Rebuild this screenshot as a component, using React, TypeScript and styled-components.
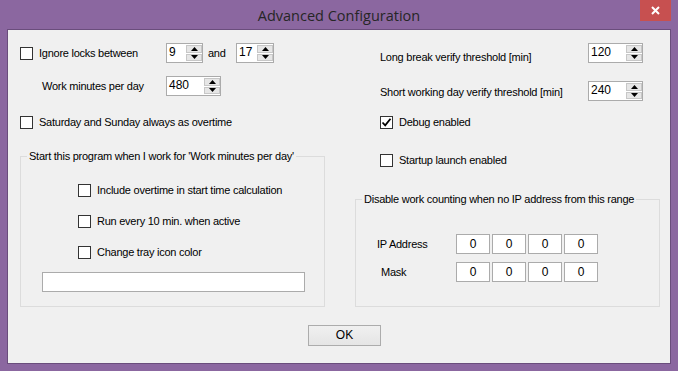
import React from "react";
import styled, { createGlobalStyle } from "styled-components";

const GlobalStyle = createGlobalStyle`
  html, body {
    margin: 0;
    padding: 0;
    background: #8b67a0;
  }
  * {
    box-sizing: border-box;
  }
`;

const Window = styled.div`
  width: 678px;
  height: 371px;
  background-color: #8b67a0;
  display: flex;
  flex-direction: column;
  padding: 0 7px 7px 7px;
  font-family: "Liberation Sans", Arial, sans-serif;
  font-size: 11px;
  letter-spacing: -0.25px;
  color: #000;
`;

const TitleBar = styled.div`
  height: 29px;
  display: grid;
  grid-template-columns: 40px 1fr 40px;
  align-items: start;
`;

const Title = styled.div`
  grid-column: 2;
  text-align: center;
  font-family: "Open Sans", "Noto Sans", sans-serif;
  font-size: 14.5px;
  letter-spacing: 0;
  line-height: 32px;
  color: #262626;
`;

const CloseButton = styled.div`
  grid-column: 3;
  justify-self: end;
  width: 31px;
  height: 21px;
  background-color: #c75050;
  display: flex;
  align-items: center;
  justify-content: center;
`;

const Client = styled.div`
  flex: 1;
  background-color: #f0f0f0;
  border: 1px solid #6a4d7c;
  display: flex;
  flex-direction: column;
  padding: 13px 10px 0 12px;
`;

const Columns = styled.div`
  display: grid;
  grid-template-columns: 305px 305px;
  column-gap: 30px;
`;

const Column = styled.div`
  display: flex;
  flex-direction: column;
`;

const Row = styled.div<{ $top?: number; $indent?: number }>`
  display: flex;
  align-items: center;
  height: 20px;
  margin-top: ${(p) => p.$top ?? 0}px;
  padding-left: ${(p) => p.$indent ?? 0}px;
`;

const TopRow = styled(Row)`
  align-items: flex-start;
`;

const Label = styled.span<{ $width?: number; $pad?: number; $shift?: number }>`
  display: inline-block;
  width: ${(p) => (p.$width ? `${p.$width}px` : "auto")};
  padding-left: ${(p) => p.$pad ?? 0}px;
  padding-top: ${(p) => p.$shift ?? 0}px;
  line-height: 13px;
  white-space: nowrap;
  flex-shrink: 0;
`;

const CheckLabel = styled.label<{ $width?: number }>`
  display: flex;
  align-items: center;
  gap: 6px;
  width: ${(p) => (p.$width ? `${p.$width}px` : "auto")};
  flex-shrink: 0;
  white-space: nowrap;
`;

const Box = styled.span`
  width: 13px;
  height: 13px;
  border: 1px solid #333;
  background-color: #fff;
  display: inline-flex;
  align-items: center;
  justify-content: center;
  flex-shrink: 0;
`;

const SpinBox = styled.div<{ $w: number }>`
  width: ${(p) => p.$w}px;
  height: 20px;
  border: 1px solid #ababab;
  background-color: #fff;
  display: flex;
  flex-shrink: 0;
`;

const SpinValue = styled.div`
  flex: 1;
  padding-left: 2px;
  font-size: 12px;
  letter-spacing: 0;
  line-height: 17px;
`;

const SpinButtons = styled.div`
  width: 16px;
  display: flex;
  flex-direction: column;
  gap: 1px;
  padding: 1px 0 1px 0;
`;

const SpinButton = styled.div`
  flex: 1;
  background-color: #e6e6e6;
  border: 1px solid #c7c7c7;
  display: flex;
  align-items: center;
  justify-content: center;
`;

const RightSpin = styled.div`
  margin-left: auto;
  margin-right: 17px;
`;

const Group = styled.fieldset<{ $top: number; $height: number }>`
  margin: ${(p) => p.$top}px 0 0 0;
  padding: 0;
  height: ${(p) => p.$height}px;
  border: 1px solid #dcdcdc;
  min-inline-size: 0;
  display: flex;
  flex-direction: column;
`;

const Legend = styled.legend`
  margin-left: 6px;
  padding: 0 2px;
  line-height: 13px;
  white-space: nowrap;
`;

const TextField = styled.div`
  margin: 10px 0 0 21px;
  width: 263px;
  height: 20px;
  border: 1px solid #ababab;
  background-color: #fff;
`;

const IpGrid = styled.div`
  display: flex;
  gap: 2px;
`;

const IpCell = styled.div`
  width: 34px;
  height: 20px;
  border: 1px solid #ababab;
  background-color: #fff;
  text-align: center;
  font-size: 12px;
  letter-spacing: 0;
  line-height: 18px;
`;

const Footer = styled.div`
  display: flex;
  justify-content: center;
  padding-left: 9px;
  margin-top: 18px;
`;

const Button = styled.div`
  width: 73px;
  height: 21px;
  border: 1px solid #acacac;
  background: linear-gradient(#f0f0f0, #e5e5e5);
  text-align: center;
  font-size: 12px;
  letter-spacing: 0;
  line-height: 19px;
`;

const Arrow: React.FC<{ up?: boolean }> = ({ up }) => (
  <svg width="7" height="4" viewBox="0 0 7 4">
    <polygon points={up ? "0,4 7,4 3.5,0" : "0,0 7,0 3.5,4"} fill="#000" />
  </svg>
);

const Spinner: React.FC<{ value: string; w: number }> = ({ value, w }) => (
  <SpinBox $w={w}>
    <SpinValue>{value}</SpinValue>
    <SpinButtons>
      <SpinButton>
        <Arrow up />
      </SpinButton>
      <SpinButton>
        <Arrow />
      </SpinButton>
    </SpinButtons>
  </SpinBox>
);

const Check: React.FC<{ checked?: boolean }> = ({ checked }) => (
  <Box>
    {checked && (
      <svg width="11" height="11" viewBox="0 0 11 11">
        <path
          d="M1.5 5.5 L4.2 8.3 L9.5 1.8"
          stroke="#000"
          strokeWidth="1.8"
          fill="none"
        />
      </svg>
    )}
  </Box>
);

const IpRow: React.FC<{ label: string; top: number; indent: number }> = ({
  label,
  top,
  indent,
}) => (
  <Row $top={top} $indent={21}>
    <Label $width={79} $pad={indent}>
      {label}
    </Label>
    <IpGrid>
      {[0, 1, 2, 3].map((i) => (
        <IpCell key={i}>0</IpCell>
      ))}
    </IpGrid>
  </Row>
);

export default function App() {
  return (
    <>
      <GlobalStyle />
      <Window>
        <TitleBar>
          <Title>Advanced Configuration</Title>
          <CloseButton>
            <svg width="9" height="9" viewBox="0 0 9 9">
              <path d="M1 1 L8 8 M8 1 L1 8" stroke="#fff" strokeWidth="2" />
            </svg>
          </CloseButton>
        </TitleBar>
        <Client>
          <Columns>
            <Column>
              <Row>
                <CheckLabel $width={146}>
                  <Check />
                  Ignore locks between
                </CheckLabel>
                <Spinner value="9" w={37} />
                <Label $width={33} $pad={5}>
                  and
                </Label>
                <Spinner value="17" w={38} />
              </Row>
              <Row $top={13}>
                <Label $width={146} $pad={22}>
                  Work minutes per day
                </Label>
                <Spinner value="480" w={55} />
              </Row>
              <Row $top={16}>
                <CheckLabel>
                  <Check />
                  Saturday and Sunday always as overtime
                </CheckLabel>
              </Row>
              <Group $top={18} $height={157}>
                <Legend>Start this program when I work for 'Work minutes per day'</Legend>
                <Row $top={17} $indent={57}>
                  <CheckLabel>
                    <Check />
                    Include overtime in start time calculation
                  </CheckLabel>
                </Row>
                <Row $top={11} $indent={57}>
                  <CheckLabel>
                    <Check />
                    Run every 10 min. when active
                  </CheckLabel>
                </Row>
                <Row $top={11} $indent={57}>
                  <CheckLabel>
                    <Check />
                    Change tray icon color
                  </CheckLabel>
                </Row>
                <TextField />
              </Group>
            </Column>
            <Column>
              <TopRow $indent={25}>
                <Label $shift={8}>Long break verify threshold [min]</Label>
                <RightSpin>
                  <Spinner value="120" w={55} />
                </RightSpin>
              </TopRow>
              <TopRow $top={18} $indent={25}>
                <Label $shift={5}>Short working day verify threshold [min]</Label>
                <RightSpin>
                  <Spinner value="240" w={55} />
                </RightSpin>
              </TopRow>
              <Row $top={11} $indent={25}>
                <CheckLabel>
                  <Check checked />
                  Debug enabled
                </CheckLabel>
              </Row>
              <Row $top={18} $indent={25}>
                <CheckLabel>
                  <Check />
                  Startup launch enabled
                </CheckLabel>
              </Row>
              <Group $top={23} $height={114}>
                <Legend>Disable work counting when no IP address from this range</Legend>
                <IpRow label="IP Address" top={28} indent={0} />
                <IpRow label="Mask" top={8} indent={4} />
              </Group>
            </Column>
          </Columns>
          <Footer>
            <Button>OK</Button>
          </Footer>
        </Client>
      </Window>
    </>
  );
}
